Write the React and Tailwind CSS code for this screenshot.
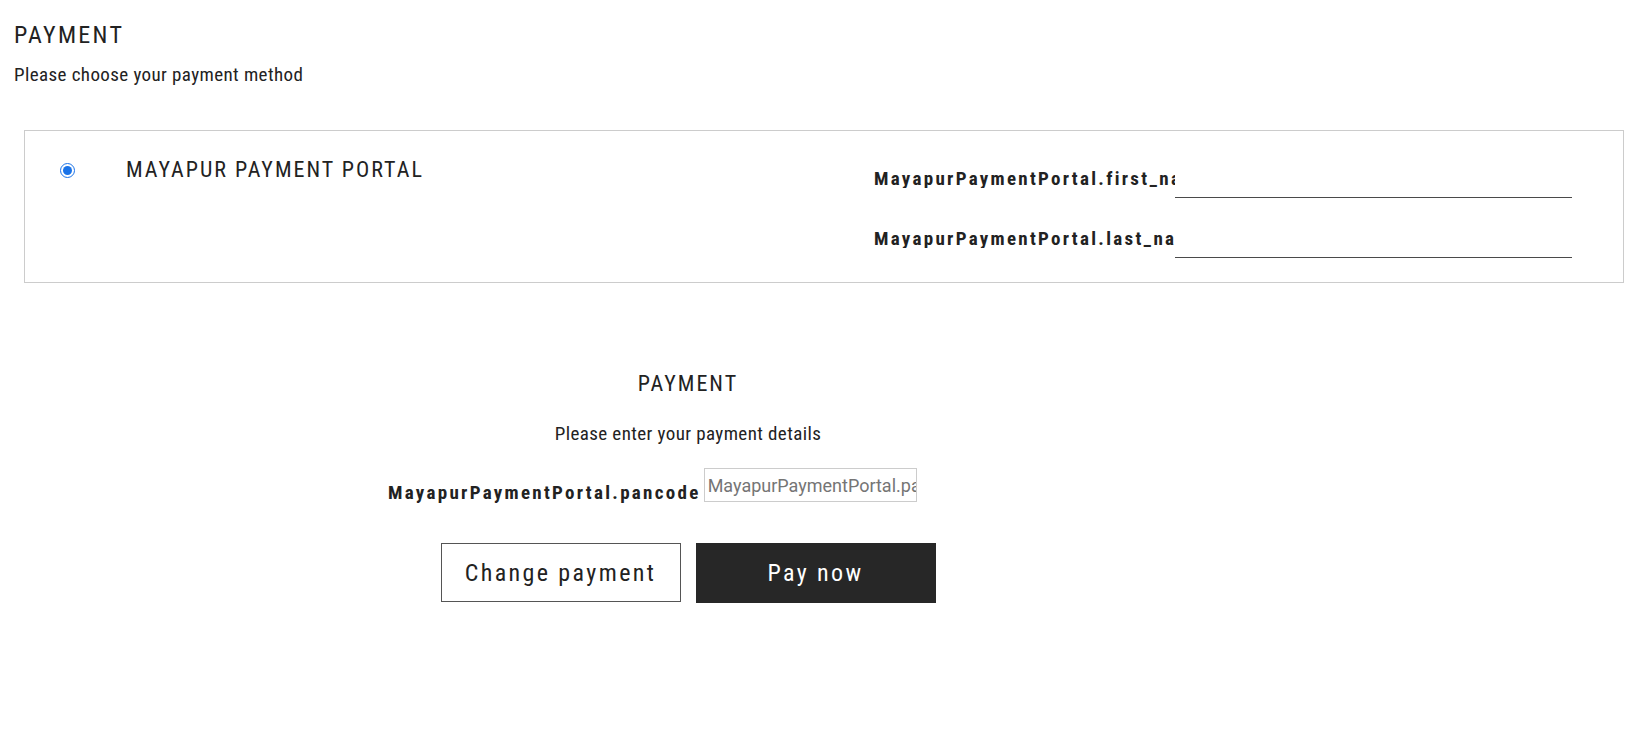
export default function App() {
  const f = "font-['Roboto',sans-serif] [font-stretch:75%]";
  return (
    <div className={`min-h-[729px] w-full bg-white text-[#222] ${f}`}>
      <div className="pl-[14px] pt-[23px]">
        <h2 className="text-[24px] leading-[24px] font-normal tracking-[2.3px]">PAYMENT</h2>
        <p className="mt-[19px] text-[19px] leading-[18px] tracking-[0.4px]">Please choose your payment method</p>
      </div>

      <div className="ml-[24px] mt-[46px] flex h-[153px] w-[1600px] border border-[#cccccc]">
        <div className="flex w-[849px] shrink-0 items-start pt-[28px]">
          <input
            type="radio"
            checked
            readOnly
            className="ml-[35px] mt-[4px] h-[15px] w-[15px] accent-[#1a73e8]"
          />
          <span className="ml-[51px] text-[22px] leading-[22px] tracking-[2px]">MAYAPUR PAYMENT PORTAL</span>
        </div>
        <div className="flex flex-col gap-[31px] pt-[38px]">
          <div className="flex items-start">
            <label className="w-[301px] overflow-hidden whitespace-nowrap pt-[1px] text-[19px] leading-[18px] font-bold tracking-[2.3px]">
              MayapurPaymentPortal.first_name
            </label>
            <div className="h-[29px] w-[397px] border-b border-[#4a4a4a]" />
          </div>
          <div className="flex items-start">
            <label className="w-[301px] overflow-hidden whitespace-nowrap pt-[1px] text-[19px] leading-[18px] font-bold tracking-[2.3px]">
              MayapurPaymentPortal.last_name
            </label>
            <div className="h-[29px] w-[397px] border-b border-[#4a4a4a]" />
          </div>
        </div>
      </div>

      <div className="ml-[388px] mt-[90px] w-[600px]">
        <h3 className="text-center text-[22px] leading-[22px] font-normal tracking-[2px]">PAYMENT</h3>
        <p className="mt-[30px] text-center text-[19px] leading-[18px] tracking-[0.4px]">Please enter your payment details</p>
        <div className="mt-[25px] flex items-start">
          <label className="mt-[16px] whitespace-nowrap text-[19px] leading-[18px] font-bold tracking-[2.3px]">MayapurPaymentPortal.pancode</label>
          <div className="ml-[3px] flex h-[34px] w-[213px] shrink-0 items-center overflow-hidden whitespace-nowrap border border-[#cccccc] pl-[3px] font-['Roboto',sans-serif] [font-stretch:100%] text-[18px] text-[#757575]">
            MayapurPaymentPortal.pancode
          </div>
        </div>
        <div className="mt-[41px] flex justify-center gap-[15px]">
          <button className="h-[59px] w-[240px] border border-[#555] bg-white text-[24px] tracking-[2.4px] text-[#222]">
            Change payment
          </button>
          <button className="h-[60px] w-[240px] bg-[#272727] text-[24px] tracking-[2.4px] text-white">
            Pay now
          </button>
        </div>
      </div>
    </div>
  );
}
